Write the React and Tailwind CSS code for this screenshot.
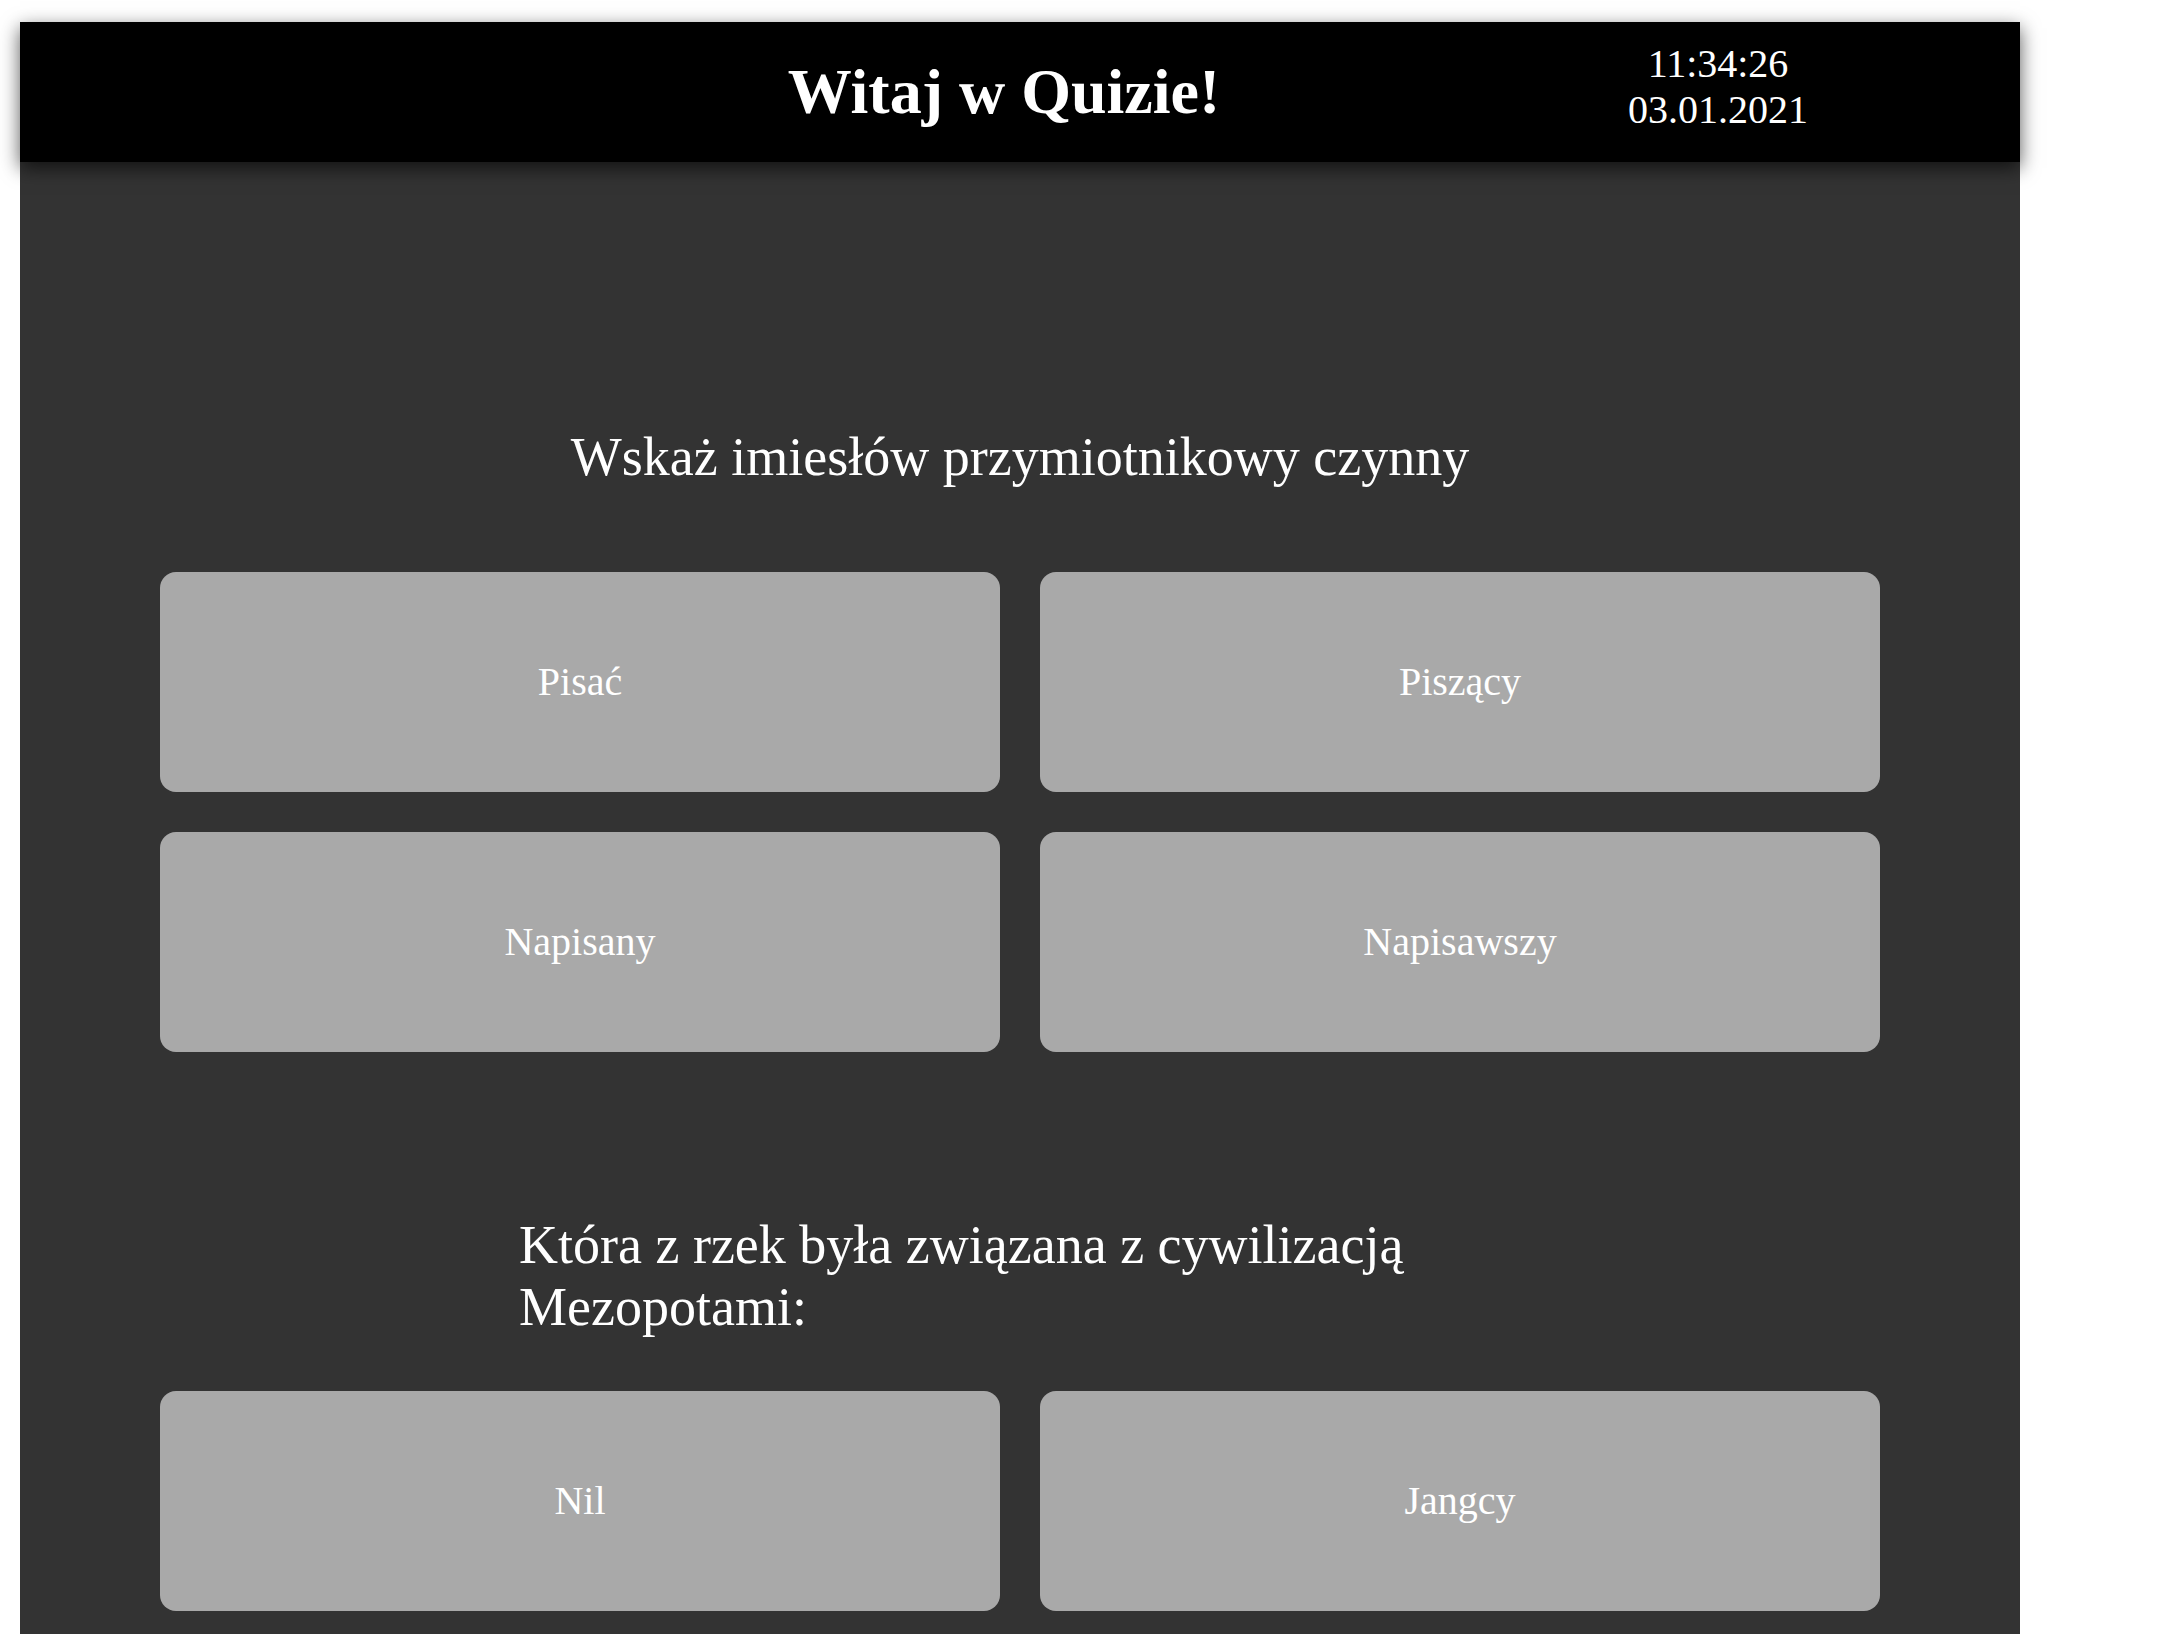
import React from 'react'

const questions = [
  {
    text: 'Wskaż imiesłów przymiotnikowy czynny',
    answers: ['Pisać', 'Piszący', 'Napisany', 'Napisawszy'],
  },
  {
    text: 'Która z rzek była związana z cywilizacją Mezopotami:',
    answers: ['Nil', 'Jangcy'],
  },
]

function Question({ question }) {
  return (
    <section className="flex flex-col">
      <div className="min-h-[124px] flex items-center justify-center">
        <p className="max-w-[1002px] text-left text-[54px] leading-[62px]">{question.text}</p>
      </div>
      <div className="mt-[53px] px-[140px] grid grid-cols-2 gap-[40px]">
        {question.answers.map((a) => (
          <button
            key={a}
            type="button"
            className="h-[220px] rounded-[16px] bg-[#a9a9a9] text-white text-[40px] flex items-center justify-center"
          >
            {a}
          </button>
        ))}
      </div>
    </section>
  )
}

export default function App() {
  return (
    <div className="h-screen overflow-hidden bg-white pt-[22px] pl-[20px] font-['Liberation_Serif',serif] text-white">
      <div className="w-[2000px] min-h-[1612px] bg-[#333333] flex flex-col">
        <header className="relative z-10 h-[140px] bg-black grid grid-cols-[1fr_auto_1fr] items-center pr-[32px] shadow-[0_6px_18px_rgba(0,0,0,0.65)]">
          <div />
          <h1 className="text-[64px] font-bold leading-[74px]">Witaj w Quizie!</h1>
          <div className="flex justify-end pr-[180px] pb-[10px]">
            <div className="text-center text-[40px] leading-[46px]">
              <div>11:34:26</div>
              <div>03.01.2021</div>
            </div>
          </div>
        </header>
        <main className="pt-[233px] flex flex-col gap-[162px]">
          {questions.map((q) => (
            <Question key={q.text} question={q} />
          ))}
        </main>
      </div>
    </div>
  )
}
